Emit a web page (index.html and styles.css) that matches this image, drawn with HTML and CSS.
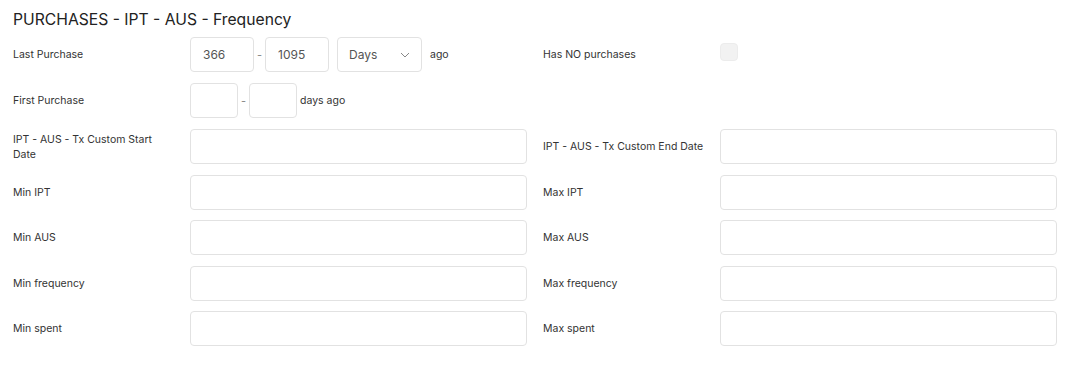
FILE: index.html
```html
<!DOCTYPE html>
<html lang="en">
<head>
    <meta charset="UTF-8">
    <meta name="viewport" content="width=device-width, initial-scale=1.0">
    <title>Purchases - IPT - AUS - Frequency</title>
    <link rel="stylesheet" href="styles.css">
</head>
<body>
    <div class="panel">
        <h2 class="panel-title">PURCHASES - IPT - AUS - Frequency</h2>

        <div class="top-row">
            <div class="range-field">
                <label class="field-label">Last Purchase</label>
                <div class="range-inputs">
                    <input class="input input-mid" type="text" value="366">
                    <span class="dash">-</span>
                    <input class="input input-mid" type="text" value="1095">
                    <div class="select">
                        <span>Days</span>
                        <svg class="chevron" width="10" height="6" viewBox="0 0 10 6"><path d="M1 1l4 4 4-4" fill="none" stroke="#888" stroke-width="1"/></svg>
                    </div>
                    <span class="suffix">ago</span>
                </div>
            </div>
            <div class="check-field">
                <label class="field-label">Has NO purchases</label>
                <span class="checkbox"></span>
            </div>
        </div>

        <div class="range-field second">
            <label class="field-label">First Purchase</label>
            <div class="range-inputs">
                <input class="input input-small" type="text">
                <span class="dash">-</span>
                <input class="input input-small" type="text">
                <span class="suffix tight">days ago</span>
            </div>
        </div>

        <div class="pairs">
            <div class="field">
                <label class="field-label">IPT - AUS - Tx Custom Start Date</label>
                <input class="input input-wide" type="text">
            </div>
            <div class="field">
                <label class="field-label">IPT - AUS - Tx Custom End Date</label>
                <input class="input input-wide" type="text">
            </div>
            <div class="field">
                <label class="field-label">Min IPT</label>
                <input class="input input-wide" type="text">
            </div>
            <div class="field">
                <label class="field-label">Max IPT</label>
                <input class="input input-wide" type="text">
            </div>
            <div class="field">
                <label class="field-label">Min AUS</label>
                <input class="input input-wide" type="text">
            </div>
            <div class="field">
                <label class="field-label">Max AUS</label>
                <input class="input input-wide" type="text">
            </div>
            <div class="field">
                <label class="field-label">Min frequency</label>
                <input class="input input-wide" type="text">
            </div>
            <div class="field">
                <label class="field-label">Max frequency</label>
                <input class="input input-wide" type="text">
            </div>
            <div class="field">
                <label class="field-label">Min spent</label>
                <input class="input input-wide" type="text">
            </div>
            <div class="field">
                <label class="field-label">Max spent</label>
                <input class="input input-wide" type="text">
            </div>
        </div>
    </div>
</body>
</html>
```

FILE: styles.css
```css
body {
    margin: 0;
    background: #ffffff;
    font-family: Inter, "Noto Sans", sans-serif;
    color: #333333;
}
.panel {
    padding: 10px 17px 0 13px;
}
.panel-title {
    margin: 0 0 7px 0;
    font-size: 15.7px;
    font-weight: 400;
    color: #222222;
    line-height: 20px;
}
.field-label {
    box-sizing: border-box;
    width: 177px;
    padding-right: 15px;
    flex-shrink: 0;
    font-size: 10.5px;
    line-height: 15px;
    color: #333333;
}
.top-row {
    display: flex;
    gap: 16px;
}
.range-field {
    display: flex;
    align-items: center;
    width: 514px;
}
.range-field.second {
    margin-top: 11px;
}
.range-inputs {
    display: flex;
    align-items: center;
}
.check-field {
    display: flex;
    align-items: center;
}
.input {
    box-sizing: border-box;
    height: 35px;
    border: 1px solid #e2e2e2;
    border-radius: 4px;
    background: #ffffff;
    font-family: inherit;
    font-size: 12px;
    color: #555555;
    padding: 0 12px;
    outline: none;
}
.input-mid {
    width: 64px;
}
.input-small {
    width: 48px;
}
.input-wide {
    flex: 1;
    min-width: 0;
}
.dash {
    width: 11px;
    text-align: center;
    font-size: 11px;
    color: #888888;
}
.select {
    box-sizing: border-box;
    display: flex;
    align-items: center;
    justify-content: space-between;
    width: 85px;
    height: 35px;
    margin-left: 8px;
    padding: 0 11px 0 11px;
    border: 1px solid #e2e2e2;
    border-radius: 4px;
    font-size: 12px;
    color: #555555;
}
.suffix {
    margin-left: 8px;
    font-size: 10.5px;
    color: #333333;
}
.suffix.tight {
    margin-left: 3px;
}
.checkbox {
    display: inline-block;
    width: 18px;
    height: 18px;
    box-sizing: border-box;
    border: 1px solid #ececec;
    border-radius: 4px;
    background: #f2f2f2;
    margin-top: -5px;
}
.pairs {
    display: grid;
    grid-template-columns: 1fr 1fr;
    column-gap: 16px;
    row-gap: 10.5px;
    margin-top: 11px;
}
.field {
    display: flex;
    align-items: center;
}
```
